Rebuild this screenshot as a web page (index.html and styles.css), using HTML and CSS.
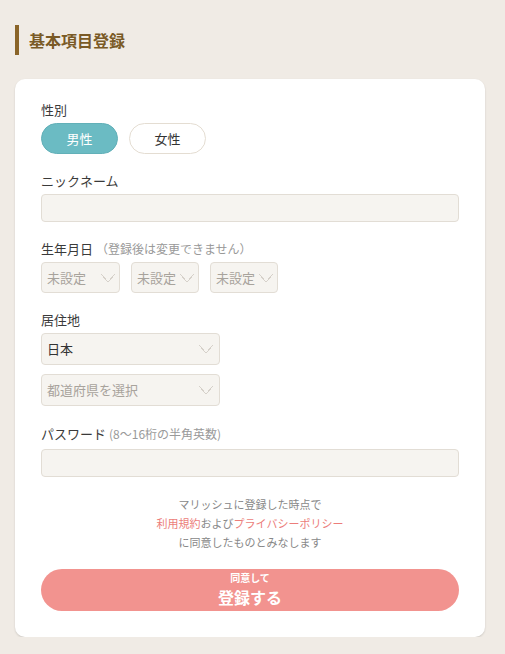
FILE: index.html
```html
<!DOCTYPE html>
<html lang="ja">
<head>
  <meta charset="UTF-8">
  <meta name="viewport" content="width=device-width, initial-scale=1.0">
  <title>基本項目登録</title>
  <link rel="stylesheet" href="styles.css">
</head>
<body>
  <h1 class="page-title">基本項目登録</h1>

  <form class="card">
    <div class="field">
      <div class="label">性別</div>
      <div class="gender">
        <button type="button" class="gender-btn active">男性</button>
        <button type="button" class="gender-btn">女性</button>
      </div>
    </div>

    <div class="field">
      <div class="label">ニックネーム</div>
      <div class="input"></div>
    </div>

    <div class="field">
      <div class="label">生年月日 <span class="note">（登録後は変更できません）</span></div>
      <div class="row">
        <div class="select year placeholder">未設定<span class="chev"></span></div>
        <div class="select small placeholder">未設定<span class="chev"></span></div>
        <div class="select small placeholder">未設定<span class="chev"></span></div>
      </div>
    </div>

    <div class="field">
      <div class="label">居住地</div>
      <div class="select wide">日本<span class="chev"></span></div>
      <div class="select wide placeholder second">都道府県を選択<span class="chev"></span></div>
    </div>

    <div class="field pw">
      <div class="label">パスワード<span class="note pw-note">(8〜16桁の半角英数)</span></div>
      <div class="input"></div>
    </div>

    <p class="terms">
      マリッシュに登録した時点で<br>
      <a href="#">利用規約</a>および<a href="#">プライバシーポリシー</a><br>
      に同意したものとみなします
    </p>

    <button type="button" class="submit">
      <span class="submit-sub">同意して</span>
      <span class="submit-main">登録する</span>
    </button>
  </form>
</body>
</html>
```

FILE: styles.css
```css
body {
  font-family: "Noto Sans CJK JP", "Noto Sans", sans-serif;
  background-color: #f0ebe5;
  color: #333;
  margin: 0;
  padding: 25px 20px 0 15px;
}
.page-title {
  margin: 0 0 24px;
  padding-left: 10px;
  border-left: 4px solid #8a6428;
  font-size: 16px;
  line-height: 30px;
  font-weight: bold;
  color: #7a5a26;
}
.card {
  background-color: white;
  border-radius: 10px;
  box-shadow: 0 1px 2px rgba(0, 0, 0, 0.15);
  padding: 22px 26px 26px;
}
.field {
  margin-bottom: 18px;
}
.field.pw {
  margin-top: 19px;
}
.label {
  font-size: 13px;
  line-height: 18px;
  margin-bottom: 4px;
  color: #3a3a3a;
}
.field.pw .label {
  margin-bottom: 6px;
}
.note {
  font-size: 12px;
  color: #999;
}
.pw-note {
  margin-left: 3px;
}
.gender {
  display: flex;
  gap: 11px;
}
.gender-btn {
  width: 77px;
  height: 31px;
  border-radius: 16px;
  border: 1px solid #e4ddd2;
  background-color: white;
  color: #333;
  font-family: inherit;
  font-size: 13px;
  padding: 0;
}
.gender-btn.active {
  background-color: #6bbbc3;
  border-color: #62b0b8;
  color: white;
}
.input {
  height: 26px;
  background-color: #f6f4f0;
  border: 1px solid #e2ddd5;
  border-radius: 4px;
}
.row {
  display: flex;
  gap: 11px;
}
.select {
  position: relative;
  box-sizing: border-box;
  height: 31px;
  padding-left: 5px;
  background-color: #f6f4f0;
  border: 1px solid #e2ddd5;
  border-radius: 4px;
  font-size: 13px;
  line-height: 29px;
  color: #333;
}
.select.placeholder {
  color: #a8a39c;
}
.select.year {
  width: 79px;
}
.select.small {
  width: 68px;
}
.select.wide {
  width: 179px;
  height: 32px;
  line-height: 30px;
}
.select.second {
  margin-top: 9px;
}
.chev {
  position: absolute;
  right: 4px;
  top: 50%;
  width: 14px;
  height: 8px;
  margin-top: -4px;
  background:
    linear-gradient(to top right, transparent calc(50% - 0.5px), #d6d1ca calc(50% - 0.5px), #d6d1ca calc(50% + 0.5px), transparent calc(50% + 0.5px)) left / 50% 100% no-repeat,
    linear-gradient(to top left, transparent calc(50% - 0.5px), #d6d1ca calc(50% - 0.5px), #d6d1ca calc(50% + 0.5px), transparent calc(50% + 0.5px)) right / 50% 100% no-repeat;
}
.select.wide .chev {
  right: 6px;
}
.terms {
  margin: 5px 0 17px;
  text-align: center;
  font-size: 11px;
  line-height: 19px;
  color: #888;
}
.terms a {
  color: #ec7d7a;
  text-decoration: none;
}
.submit {
  display: flex;
  flex-direction: column;
  align-items: center;
  justify-content: center;
  width: 100%;
  height: 42px;
  border: none;
  border-radius: 21px;
  background-color: #f2938f;
  color: white;
  font-family: inherit;
  font-weight: bold;
  padding: 0;
}
.submit-sub {
  font-size: 10px;
  line-height: 10px;
}
.submit-main {
  margin-top: 4px;
  font-size: 16px;
  line-height: 20px;
}
```
